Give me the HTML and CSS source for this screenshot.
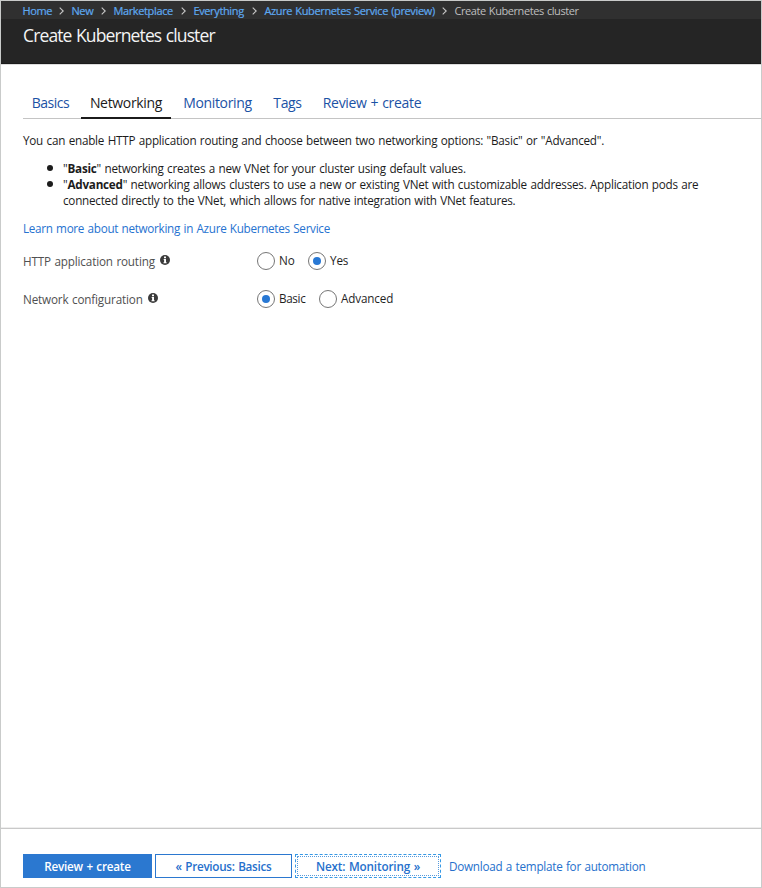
FILE: index.html
```html
<!DOCTYPE html>
<html lang="en">
<head>
<meta charset="utf-8">
<title>Create Kubernetes cluster</title>
<link rel="stylesheet" href="styles.css">
</head>
<body>
<div class="blade">
  <nav class="breadcrumb">
    <a class="bc-home">Home</a><svg class="chev" viewBox="0 0 5 8"><path d="M.7.7 4.2 4 .7 7.3"/></svg>
    <a class="bc-new">New</a><svg class="chev" viewBox="0 0 5 8"><path d="M.7.7 4.2 4 .7 7.3"/></svg>
    <a class="bc-market">Marketplace</a><svg class="chev" viewBox="0 0 5 8"><path d="M.7.7 4.2 4 .7 7.3"/></svg>
    <a class="bc-every">Everything</a><svg class="chev" viewBox="0 0 5 8"><path d="M.7.7 4.2 4 .7 7.3"/></svg>
    <a class="bc-aks">Azure Kubernetes Service (preview)</a><svg class="chev" viewBox="0 0 5 8"><path d="M.7.7 4.2 4 .7 7.3"/></svg>
    <span class="current">Create Kubernetes cluster</span>
  </nav>
  <header class="title"><h1>Create Kubernetes cluster</h1></header>
  <main class="content">
    <div class="tabs">
      <a class="tab tab-basics">Basics</a>
      <a class="tab tab-networking active">Networking</a>
      <a class="tab tab-monitoring">Monitoring</a>
      <a class="tab tab-tags">Tags</a>
      <a class="tab tab-review">Review + create</a>
    </div>
    <p class="intro">You can enable HTTP application routing and choose between two networking options: "Basic" or "Advanced".</p>
    <ul class="options">
      <li>"<b>Basic</b>" networking creates a new VNet for your cluster using default values.</li>
      <li>"<b>Advanced</b>" networking allows clusters to use a new or existing VNet with customizable addresses. Application pods are<br>connected directly to the VNet, which allows for native integration with VNet features.</li>
    </ul>
    <a class="learn">Learn more about networking in Azure Kubernetes Service</a>
    <div class="row">
      <div class="label"><span>HTTP application routing</span><svg class="info" viewBox="0 0 10 10"><circle cx="5" cy="5" r="5"/><path d="M4 1.6h2v1.6H4zM3.7 4.1H6v3.2h.6v1H3.5v-1h.6V5.1h-.4z"/></svg></div>
      <div class="choice choice-no"><i class="radio"></i><span>No</span></div>
      <div class="choice"><i class="radio on"></i><span>Yes</span></div>
    </div>
    <div class="row">
      <div class="label"><span>Network configuration</span><svg class="info" viewBox="0 0 10 10"><circle cx="5" cy="5" r="5"/><path d="M4 1.6h2v1.6H4zM3.7 4.1H6v3.2h.6v1H3.5v-1h.6V5.1h-.4z"/></svg></div>
      <div class="choice choice-basic"><i class="radio on"></i><span>Basic</span></div>
      <div class="choice"><i class="radio"></i><span>Advanced</span></div>
    </div>
  </main>
  <footer class="footer">
    <a class="btn primary">Review + create</a>
    <a class="btn previous">« Previous: Basics</a>
    <a class="btn next">Next: Monitoring »</a>
    <a class="download">Download a template for automation</a>
  </footer>
</div>
</body>
</html>
```

FILE: styles.css
```css
* { box-sizing: border-box; }
body { margin: 0; font-family: "Open Sans", "Noto Sans", sans-serif; font-size: 11.7px; line-height: 16px; letter-spacing: -.23px; word-spacing: .7px; color: #1c1c1c; background: #fff; }
.blade { display: flex; flex-direction: column; width: 762px; height: 888px; border: 1px solid #c9cbca; overflow: hidden; }
.breadcrumb { display: flex; align-items: center; flex: none; height: 18px; padding: 1px 0 0 21.4px; background: #303030; font-size: 11px; white-space: nowrap; letter-spacing: -.36px; }
.breadcrumb a { color: #5ea9f0; -webkit-text-stroke: .2px #5ea9f0; }
.breadcrumb .current { color: #bfbfbf; letter-spacing: -.42px; }
.bc-home { width: 30px; }
.bc-new { width: 23px; }
.bc-market { width: 61px; }
.bc-every { width: 52px; }
.bc-aks { width: 171px; }
.chev { width: 5px; height: 8px; margin: 0 7px; fill: none; stroke: #c8c8c8; stroke-width: 1.1; }
.title { flex: none; height: 45px; padding: 4px 0 0 22px; background: #252525; border-bottom: 1px solid #1b1b1b; }
h1 { margin: 0; font-size: 17.5px; line-height: 24px; font-weight: 400; color: #f4f4f4; letter-spacing: -.87px; }
.content { flex: 1; padding-left: 22px; border-top: 1px solid #ddd; border-bottom: 1px solid #eee; }
.tabs { display: flex; height: 54px; padding-top: 26px; border-bottom: 1px solid #c4c4c4; font-size: 14px; line-height: 24px; letter-spacing: -.33px; white-space: nowrap; }
.tab { height: 28px; color: #1b52a5; text-align: center; }
.tab-basics { width: 55px; margin-right: 3px; letter-spacing: -.5px; }
.tab-networking { width: 90px; }
.tab-monitoring { width: 93px; }
.tab-tags { width: 47px; }
.tab-review { width: 122px; }
.tab.active { color: #1b1b1b; border-bottom: 2px solid #1b1b1b; }
.intro { margin: 13px 0 12px; }
.options { margin: 0; padding: 0; list-style: none; }
.options li { position: relative; padding-left: 40px; }
.options li::before { content: ""; position: absolute; left: 24px; top: 5px; width: 6px; height: 6px; border-radius: 50%; background: #1c1c1c; }
.options li + li { letter-spacing: -.24px; }
.learn { display: block; margin-top: 12px; color: #2672d0; letter-spacing: -.29px; }
.row { display: flex; align-items: center; height: 38px; }
.learn + .row { margin-top: 6px; }
.label { display: flex; align-items: center; width: 234px; color: #505050; letter-spacing: -.16px; }
.label span { margin-top: -1px; }
.info { width: 10px; height: 10px; margin: -2px 0 0 5px; fill: #3b3b3b; }
.info path { fill: #fff; }
.choice { display: flex; align-items: center; height: 18px; color: #1f1f1f; letter-spacing: -.15px; }
.choice span { margin: -3px 0 0 4px; }
.choice-no { width: 51px; }
.choice-basic { width: 62px; letter-spacing: -.35px; }
.radio { display: grid; place-items: center; width: 18px; height: 18px; border: 1px solid #767676; border-radius: 50%; }
.radio.on::after { content: ""; width: 8px; height: 8px; border-radius: 50%; background: #2878d4; }
.footer { display: flex; flex: none; height: 59px; padding: 25px 0 0 22px; border-top: 1px solid #c9c9c9; line-height: 25px; }
.btn { height: 24px; font-weight: 600; text-align: center; border: 1px solid #2b78d0; line-height: 23px; color: #2670cc; white-space: nowrap; }
.primary { width: 129px; margin-right: 3px; background: #2b78d0; color: #fff; }
.previous { width: 137px; margin-right: 3px; letter-spacing: -.28px; }
.next { width: 146px; border: 1px dashed #3699e6; outline: 1px dotted #589bdc; outline-offset: -3px; letter-spacing: -.14px; }
.download { margin-left: 8px; color: #2670cc; letter-spacing: -.25px; }
```
